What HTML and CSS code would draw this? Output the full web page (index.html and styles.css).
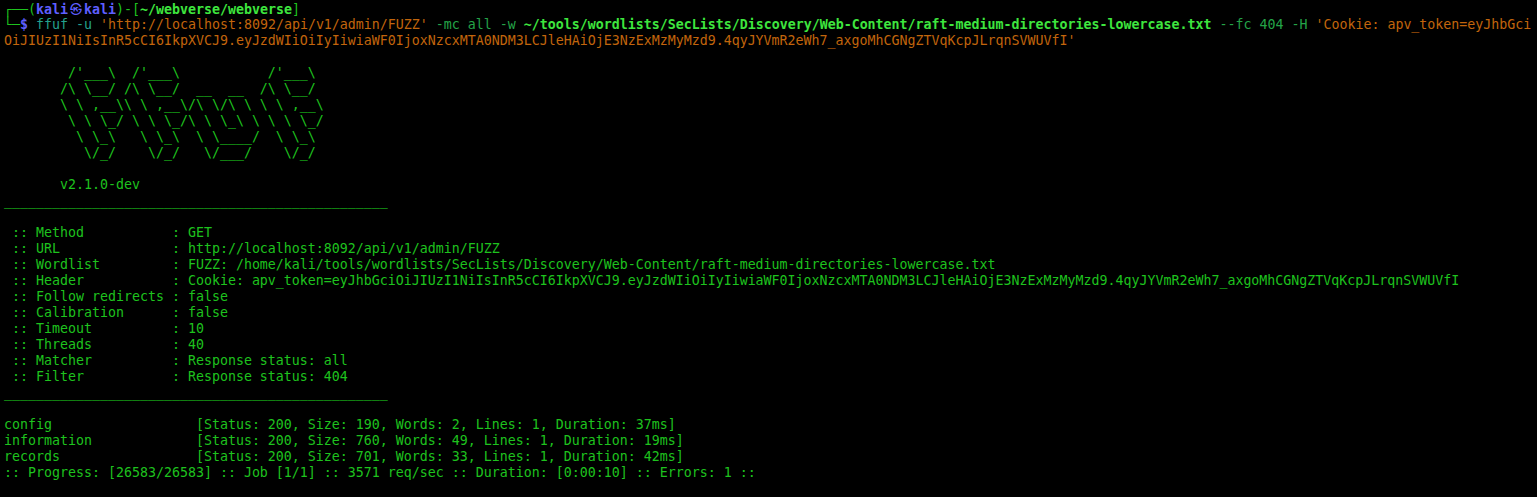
FILE: index.html
```html
<!DOCTYPE html>
<html lang="en">
<head>
<meta charset="utf-8">
<title>ffuf - terminal</title>
<link rel="stylesheet" href="styles.css">
</head>
<body>
<main class="terminal">
<div class="ln"><span class="g">┌──(</span><span class="usr">kali<span class="at">㉿</span>kali</span><span class="g">)-[</span><span class="path">~/webverse/webverse</span><span class="g">]</span></div>
<div class="ln"><span class="g">└─</span><span class="usr">$</span> <span class="cmd">ffuf -u</span> <span class="str">'http://localhost:8092/api/v1/admin/FUZZ'</span> <span class="opt">-mc all -w</span> <span class="bpath">~/tools/wordlists/SecLists/Discovery/Web-Content/raft-medium-directories-lowercase.txt</span> <span class="opt">--fc 404 -H</span> <span class="str">'Cookie: apv_token=eyJhbGci</span></div>
<div class="ln"><span class="str">OiJIUzI1NiIsInR5cCI6IkpXVCJ9.eyJzdWIiOiIyIiwiaWF0IjoxNzcxMTA0NDM3LCJleHAiOjE3NzExMzMyMzd9.4qyJYVmR2eWh7_axgoMhCGNgZTVqKcpJLrqnSVWUVfI'</span></div>
<div class="ln"> </div>
<div class="ln">        /'___\  /'___\           /'___\       </div>
<div class="ln">       /\ \__/ /\ \__/  __  __  /\ \__/       </div>
<div class="ln">       \ \ ,__\\ \ ,__\/\ \/\ \ \ \ ,__\      </div>
<div class="ln">        \ \ \_/ \ \ \_/\ \ \_\ \ \ \ \_/      </div>
<div class="ln">         \ \_\   \ \_\  \ \____/  \ \_\       </div>
<div class="ln">          \/_/    \/_/   \/___/    \/_/       </div>
<div class="ln"> </div>
<div class="ln">       v2.1.0-dev</div>
<div class="ln">________________________________________________</div>
<div class="ln"> </div>
<div class="ln"> :: Method           : GET</div>
<div class="ln"> :: URL              : http://localhost:8092/api/v1/admin/FUZZ</div>
<div class="ln"> :: Wordlist         : FUZZ: /home/kali/tools/wordlists/SecLists/Discovery/Web-Content/raft-medium-directories-lowercase.txt</div>
<div class="ln"> :: Header           : Cookie: apv_token=eyJhbGciOiJIUzI1NiIsInR5cCI6IkpXVCJ9.eyJzdWIiOiIyIiwiaWF0IjoxNzcxMTA0NDM3LCJleHAiOjE3NzExMzMyMzd9.4qyJYVmR2eWh7_axgoMhCGNgZTVqKcpJLrqnSVWUVfI</div>
<div class="ln"> :: Follow redirects : false</div>
<div class="ln"> :: Calibration      : false</div>
<div class="ln"> :: Timeout          : 10</div>
<div class="ln"> :: Threads          : 40</div>
<div class="ln"> :: Matcher          : Response status: all</div>
<div class="ln"> :: Filter           : Response status: 404</div>
<div class="ln">________________________________________________</div>
<div class="ln"> </div>
<div class="ln">config                  [Status: 200, Size: 190, Words: 2, Lines: 1, Duration: 37ms]</div>
<div class="ln">information             [Status: 200, Size: 760, Words: 49, Lines: 1, Duration: 19ms]</div>
<div class="ln">records                 [Status: 200, Size: 701, Words: 33, Lines: 1, Duration: 42ms]</div>
<div class="ln">:: Progress: [26583/26583] :: Job [1/1] :: 3571 req/sec :: Duration: [0:00:10] :: Errors: 1 ::</div>
</main>
</body>
</html>
```

FILE: styles.css
```css
html, body {
  margin: 0;
  padding: 0;
  background: #000000;
}

.terminal {
  display: flex;
  flex-direction: column;
  padding: 1px 0 0 4px;
  font-family: "DejaVu Sans Mono", "Liberation Mono", monospace;
  font-size: 13.29px;
  line-height: 16px;
  color: #1ec21e;
}

.ln {
  height: 16px;
  white-space: pre;
}

.g {
  color: #1ec21e;
}

.usr {
  color: #5f5fff;
  font-weight: bold;
}

.at {
  display: inline-block;
  width: 16px;
  text-align: center;
  font-weight: normal;
  font-family: "Noto Sans CJK KR", "Noto Sans CJK SC", "DejaVu Sans", sans-serif;
  font-size: 12px;
}

.path {
  color: #3ee63e;
  font-weight: bold;
}

.bpath {
  color: #3ee63e;
  font-weight: bold;
}

.cmd {
  color: #24a28e;
}

.opt {
  color: #24a448;
}

.str {
  color: #c2650c;
}
```
